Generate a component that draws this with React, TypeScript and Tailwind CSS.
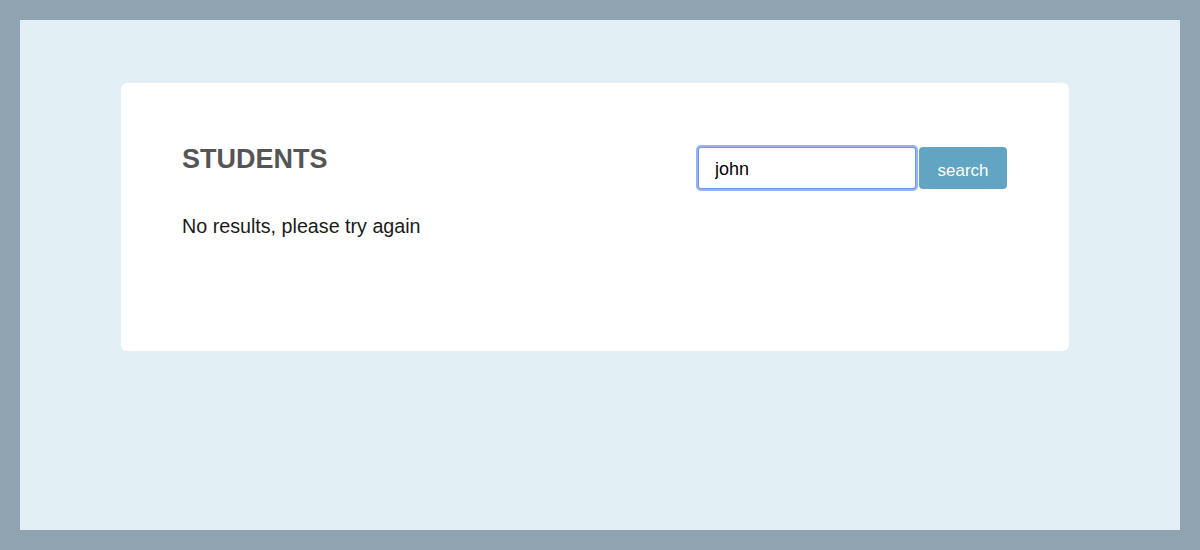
export default function App() {
  return (
    <div className="h-[550px] w-[1200px] bg-[#8fa3b0] p-5 font-['Liberation_Sans',Arial,sans-serif]">
      <div className="h-full w-full bg-[#e2eff5] pt-[63px] pl-[101px]">
        <div className="h-[268px] w-[948px] rounded-md bg-white px-[61px] pt-[61px]">
          <div className="flex items-start justify-between">
            <div>
              <h1 className="text-[27px] font-bold leading-[31px] text-[#555555]">
                STUDENTS
              </h1>
              <p className="mt-[40px] text-[19.7px] leading-[23px] text-[#1a1a1a]">
                No results, please try again
              </p>
            </div>
            <div className="mt-[3px] mr-px flex gap-[3px]">
              <input
                defaultValue="john"
                className="h-[42px] w-[218px] rounded-[3px] border border-[#6f94ee] bg-white pt-[3px] pl-[16px] text-[18px] text-black shadow-[0_0_0_2px_#94b2f4] outline-none"
              />
              <button className="h-[42px] w-[88px] rounded-[4px] bg-[#62a5c2] pt-[5px] text-[17px] text-white">
                search
              </button>
            </div>
          </div>
        </div>
      </div>
    </div>
  );
}
